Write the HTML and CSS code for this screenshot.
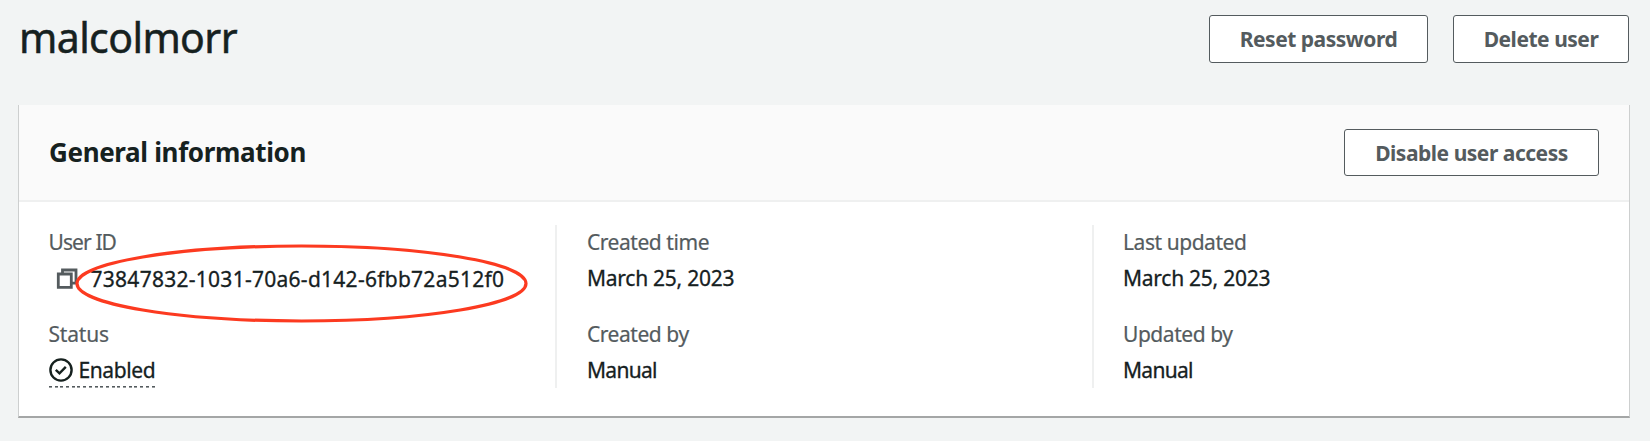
FILE: index.html
```html
<!DOCTYPE html>
<html lang="en">
<head>
<meta charset="utf-8">
<title>malcolmorr</title>
<link rel="stylesheet" href="styles.css">
</head>
<body>
<header class="page-header">
  <h1 class="title">malcolmorr</h1>
  <div class="actions">
    <button class="btn btn-reset"><span>Reset password</span></button>
    <button class="btn btn-delete"><span>Delete user</span></button>
  </div>
</header>
<section class="card">
  <div class="card-header">
    <h2 class="card-title">General information</h2>
    <button class="btn btn-disable"><span>Disable user access</span></button>
  </div>
  <div class="columns">
    <div class="column column-first">
      <div class="field">
        <div class="label"><span class="t-userid">User ID</span></div>
        <div class="value id-value">
          <svg class="copy-icon" width="22" height="22" viewBox="0 0 22 22" fill="none" stroke="#545b5e" stroke-width="2.8"><path d="M2.3 6h13v13.3h-13z"/><path d="M6.5 6V2H20v13.2h-4.5"/></svg>
          <span class="t-id">73847832-1031-70a6-d142-6fbb72a512f0</span>
          <svg class="highlight" width="454" height="80" viewBox="0 0 454 80"><ellipse cx="226.5" cy="39.5" rx="224.5" ry="37.5" fill="none" stroke="#fc3a20" stroke-width="3.2"/></svg>
        </div>
      </div>
      <div class="field">
        <div class="label"><span class="t-status">Status</span></div>
        <div class="value"><span class="status"><svg class="check-icon" width="24" height="24" viewBox="0 0 24 24" fill="none" stroke="#16211f" stroke-width="2.4"><circle cx="12" cy="12" r="10.6"/><path d="M6.8 11.8l3.7 3.6 6.3-6.5"/></svg><span class="t-enabled">Enabled</span></span></div>
      </div>
    </div>
    <div class="column">
      <div class="field">
        <div class="label">Created time</div>
        <div class="value"><span class="t-date">March 25, 2023</span></div>
      </div>
      <div class="field">
        <div class="label">Created by</div>
        <div class="value"><span class="t-manual">Manual</span></div>
      </div>
    </div>
    <div class="column">
      <div class="field">
        <div class="label">Last updated</div>
        <div class="value"><span class="t-date">March 25, 2023</span></div>
      </div>
      <div class="field">
        <div class="label">Updated by</div>
        <div class="value"><span class="t-manual">Manual</span></div>
      </div>
    </div>
  </div>
</section>
</body>
</html>
```
FILE: styles.css
```css
* { box-sizing: border-box; }
body {
  margin: 0;
  height: 441px;
  padding: 15px 20px 0 18px;
  overflow: hidden;
  background: #f2f4f4;
  color: #16211f;
  font-family: "Noto Sans", "Open Sans", sans-serif;
  font-size: 21px;
}
h1, h2 { margin: 0; white-space: nowrap; }
.page-header { display: flex; justify-content: space-between; align-items: flex-start; height: 90px; padding: 0 1px; }
.title { font-size: 41px; line-height: 44px; font-weight: 400; letter-spacing: -0.6px; -webkit-text-stroke: 0.5px; }
.actions { display: flex; gap: 25px; }
.btn {
  height: 48px;
  padding: 0;
  border: 1.5px solid #545b5e;
  border-radius: 3px;
  background: #fff;
  color: #545b5e;
  font: 700 21px/44px "Noto Sans", sans-serif;
  letter-spacing: -0.48px;
  white-space: nowrap;
}
.btn-reset { width: 219px; }
.btn-delete { width: 176px; }
.btn-disable { width: 255px; height: 47px; }
.card { height: 313px; background: #fff; border: 1px solid #cdcfcf; border-top: 0; border-bottom: 2px solid #a4a6a6; }
.card-header { display: flex; justify-content: space-between; align-items: center; height: 97px; padding: 0 30px; background: #fafafa; border-bottom: 2px solid #eff0f0; }
.card-title { padding-bottom: 1px; font-size: 26px; line-height: 35px; font-weight: 700; letter-spacing: -0.35px; }
.columns { display: grid; grid-template-columns: 538px 537px 1fr; padding-top: 23px; }
.column { height: 163px; padding-left: 30px; border-right: 2px solid #eff0f0; }
.column-first { padding-left: 29.5px; }
.column:last-child { padding-left: 29px; border-right: 0; }
.field { height: 92px; }
.label { height: 36px; line-height: 34px; color: #545b5e; letter-spacing: -0.45px; white-space: nowrap; -webkit-text-stroke: 0.2px; }
.value { height: 36px; line-height: 35px; white-space: nowrap; -webkit-text-stroke: 0.3px; }
.t-userid { letter-spacing: -0.9px; }
.t-status { letter-spacing: -0.2px; }
.t-id { letter-spacing: 0.27px; }
.t-date { letter-spacing: -0.25px; }
.t-manual { letter-spacing: -0.7px; }
.t-enabled { padding-top: 1px; letter-spacing: -0.4px; }
.id-value { position: relative; display: flex; align-items: center; padding-left: 7px; gap: 13px; }
.highlight { position: absolute; left: 26px; top: -17px; }
.status {
  display: inline-flex;
  align-items: center;
  gap: 6px;
  height: 35px;
  padding-bottom: 2px;
  background: repeating-linear-gradient(90deg, #545b5e 0 3px, transparent 3px 5.7px) left bottom / 100% 1.6px no-repeat;
}
```
